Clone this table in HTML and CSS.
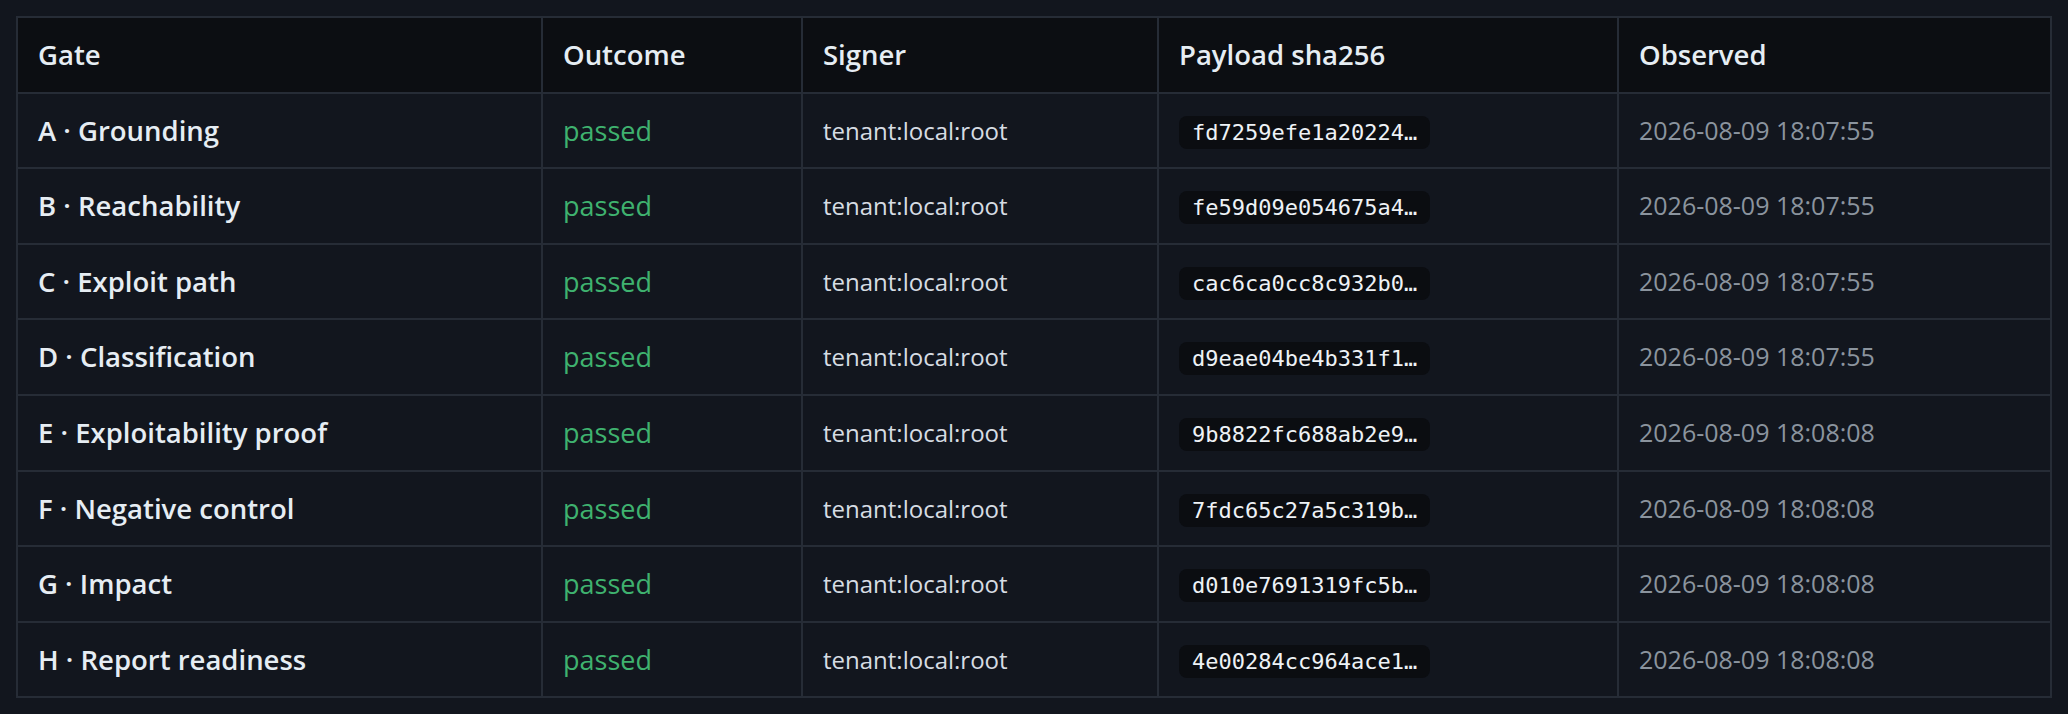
FILE: index.html
```html
<!DOCTYPE html>
<html lang="en">
<head>
  <meta charset="UTF-8">
  <title>Gate attestations</title>
  <meta name="viewport" content="width=device-width, initial-scale=1.0">
  <link rel="stylesheet" href="styles.css">
</head>
<body>
  <table class="gates">
    <colgroup>
      <col class="col-gate">
      <col class="col-outcome">
      <col class="col-signer">
      <col class="col-hash">
      <col class="col-observed">
    </colgroup>
    <thead>
      <tr>
        <th>Gate</th>
        <th>Outcome</th>
        <th>Signer</th>
        <th>Payload sha256</th>
        <th>Observed</th>
      </tr>
    </thead>
    <tbody>
      <tr>
        <td class="gate">A · Grounding</td>
        <td class="outcome">passed</td>
        <td class="signer">tenant:local:root</td>
        <td><code class="hash">fd7259efe1a20224…</code></td>
        <td class="observed">2026-08-09 18:07:55</td>
      </tr>
      <tr>
        <td class="gate">B · Reachability</td>
        <td class="outcome">passed</td>
        <td class="signer">tenant:local:root</td>
        <td><code class="hash">fe59d09e054675a4…</code></td>
        <td class="observed">2026-08-09 18:07:55</td>
      </tr>
      <tr>
        <td class="gate">C · Exploit path</td>
        <td class="outcome">passed</td>
        <td class="signer">tenant:local:root</td>
        <td><code class="hash">cac6ca0cc8c932b0…</code></td>
        <td class="observed">2026-08-09 18:07:55</td>
      </tr>
      <tr>
        <td class="gate">D · Classification</td>
        <td class="outcome">passed</td>
        <td class="signer">tenant:local:root</td>
        <td><code class="hash">d9eae04be4b331f1…</code></td>
        <td class="observed">2026-08-09 18:07:55</td>
      </tr>
      <tr>
        <td class="gate">E · Exploitability proof</td>
        <td class="outcome">passed</td>
        <td class="signer">tenant:local:root</td>
        <td><code class="hash">9b8822fc688ab2e9…</code></td>
        <td class="observed">2026-08-09 18:08:08</td>
      </tr>
      <tr>
        <td class="gate">F · Negative control</td>
        <td class="outcome">passed</td>
        <td class="signer">tenant:local:root</td>
        <td><code class="hash">7fdc65c27a5c319b…</code></td>
        <td class="observed">2026-08-09 18:08:08</td>
      </tr>
      <tr>
        <td class="gate">G · Impact</td>
        <td class="outcome">passed</td>
        <td class="signer">tenant:local:root</td>
        <td><code class="hash">d010e7691319fc5b…</code></td>
        <td class="observed">2026-08-09 18:08:08</td>
      </tr>
      <tr>
        <td class="gate">H · Report readiness</td>
        <td class="outcome">passed</td>
        <td class="signer">tenant:local:root</td>
        <td><code class="hash">4e00284cc964ace1…</code></td>
        <td class="observed">2026-08-09 18:08:08</td>
      </tr>
    </tbody>
  </table>
</body>
</html>
```

FILE: styles.css
```css
body {
  font-family: "Open Sans", "Noto Sans", sans-serif;
  background-color: #12161e;
  color: #e6edf3;
  margin: 16px;
}

.gates {
  width: 100%;
  table-layout: fixed;
  border-collapse: collapse;
  font-size: 24px;
}

.col-gate { width: 525px; }
.col-outcome { width: 260px; }
.col-signer { width: 356px; }
.col-hash { width: 460px; }
.col-observed { width: auto; }

.gates th,
.gates td {
  border: 2px solid #262c36;
  padding: 18px 20px;
  height: 37.6px;
  line-height: 37.6px;
  text-align: left;
  white-space: nowrap;
}

.gates th {
  background-color: #0c0e12;
  font-size: 27.5px;
  font-weight: 600;
  color: #e6edf3;
}

.gate {
  font-size: 27.5px;
  font-weight: 600;
  color: #e6edf3;
}

.outcome {
  font-size: 27px;
  color: #3fb26f;
}

.signer {
  color: #d6dce3;
}

.observed {
  font-size: 25px;
  color: #8b949e;
}

/* hash chip */
.hash {
  font-family: "DejaVu Sans Mono", monospace;
  font-size: 22px;
  line-height: 26px;
  padding: 4px 13px;
  border-radius: 8px;
  background-color: #0b0d11;
  color: #eef2f6;
}
```
